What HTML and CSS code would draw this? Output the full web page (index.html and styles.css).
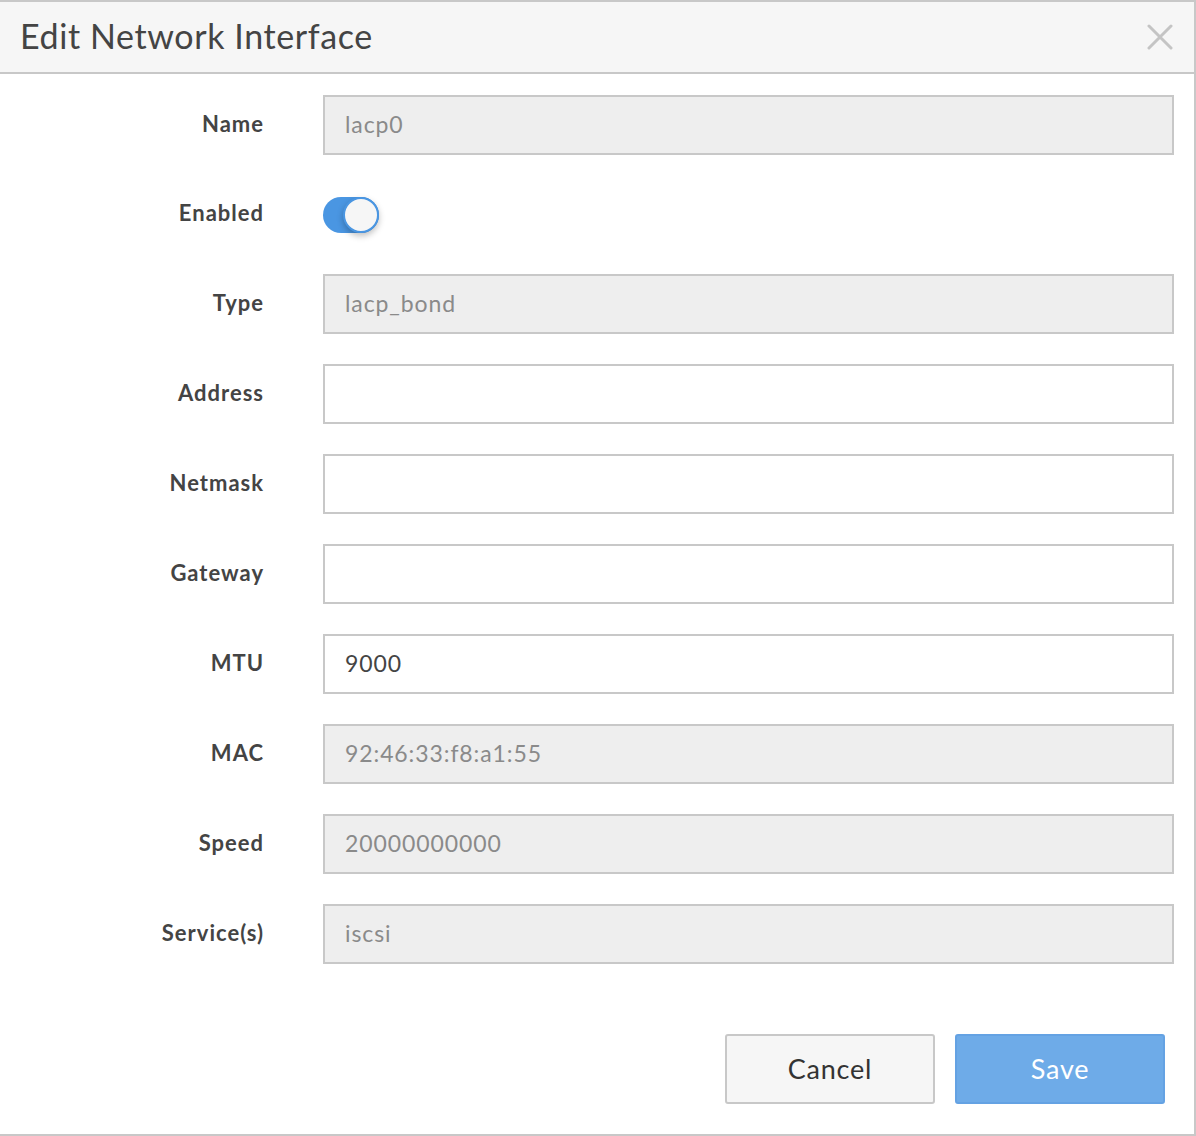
FILE: index.html
```html
<!DOCTYPE html>
<html>
<head>
<meta charset="utf-8">
<link rel="stylesheet" href="styles.css">
</head>
<body>
<div class="modal">
  <div class="header">
    <h1 class="title">Edit Network Interface</h1>
    <button class="close" aria-label="Close">
      <svg width="26" height="26" viewBox="0 0 26 26"><path d="M2 2 L24 24 M24 2 L2 24" stroke="#c4c4c4" stroke-width="3" stroke-linecap="round"/></svg>
    </button>
  </div>
  <div class="form">
    <div class="row"><label class="label">Name</label><div class="input disabled">lacp0</div></div>
    <div class="row row-toggle"><label class="label">Enabled</label><div class="toggle"><span class="knob"></span></div></div>
    <div class="row"><label class="label">Type</label><div class="input disabled">lacp_bond</div></div>
    <div class="row"><label class="label">Address</label><div class="input"></div></div>
    <div class="row"><label class="label">Netmask</label><div class="input"></div></div>
    <div class="row"><label class="label">Gateway</label><div class="input"></div></div>
    <div class="row"><label class="label">MTU</label><div class="input">9000</div></div>
    <div class="row"><label class="label">MAC</label><div class="input disabled">92:46:33:f8:a1:55</div></div>
    <div class="row"><label class="label">Speed</label><div class="input disabled">20000000000</div></div>
    <div class="row"><label class="label">Service(s)</label><div class="input disabled">iscsi</div></div>
  </div>
  <div class="footer">
    <button class="btn cancel">Cancel</button>
    <button class="btn save">Save</button>
  </div>
</div>
</body>
</html>
```
FILE: styles.css
```css
html, body {
  margin: 0;
  padding: 0;
  background: #fff;
}
body {
  font-family: "Lato", "Open Sans", sans-serif;
}
.modal {
  width: 1194px;
  height: 1132px;
  border-top: 2px solid #c8c8c8;
  border-right: 2px solid #c8c8c8;
  border-bottom: 2px solid #c8c8c8;
  display: flex;
  flex-direction: column;
}
.header {
  height: 70px;
  background: #f6f6f6;
  border-bottom: 2px solid #c8c8c8;
  display: flex;
  align-items: center;
  justify-content: space-between;
  padding: 0 20px 0 20px;
}
.title {
  margin: 0 0 3px 0;
  font-size: 34px;
  font-weight: 400;
  color: #444;
  letter-spacing: 0.6px;
}
.close {
  background: none;
  border: none;
  padding: 0;
  margin-right: 1px;
  width: 26px;
  height: 26px;
  display: flex;
}
.form {
  padding: 21px 20px 0 0;
  display: flex;
  flex-direction: column;
  gap: 30px;
}
.row {
  display: grid;
  grid-template-columns: 263px 1fr;
  column-gap: 60px;
  align-items: center;
  height: 60px;
}
.row-toggle {
  height: 59px;
}
.label {
  text-align: right;
  font-size: 22px;
  font-weight: 700;
  color: #444;
  letter-spacing: 1px;
  margin-right: -1px;
  padding-bottom: 4px;
}
.input {
  height: 54px;
  border: 2px solid #c8c8c8;
  background: #fff;
  box-sizing: content-box;
  display: flex;
  align-items: center;
  padding: 0 20px 2px 20px;
  font-size: 23px;
  letter-spacing: 0.9px;
  color: #444;
}
.input.disabled {
  background: #eeeeee;
  color: #8a8a8a;
}
.toggle {
  width: 56px;
  height: 36px;
  border-radius: 18px;
  background: #4a96e2;
  position: relative;
}
.knob {
  position: absolute;
  right: 0;
  top: 0;
  width: 32px;
  height: 32px;
  border-radius: 50%;
  background: #f6f6f6;
  border: 2px solid #4a96e2;
  box-shadow: 0 3px 6px rgba(0,0,0,0.25);
}
.footer {
  margin-top: auto;
  padding: 0 29px 30px 0;
  display: flex;
  justify-content: flex-end;
  gap: 20px;
}
.btn {
  width: 210px;
  height: 70px;
  border-radius: 3px;
  font-family: "Lato", "Open Sans", sans-serif;
  font-size: 27px;
  letter-spacing: 0.8px;
  padding-bottom: 2px;
  cursor: pointer;
}
.cancel {
  background: #f6f6f6;
  border: 2px solid #c8c8c8;
  color: #333;
}
.save {
  background: #6eabe8;
  border: 2px solid #64a2e3;
  color: #fff;
}
```
